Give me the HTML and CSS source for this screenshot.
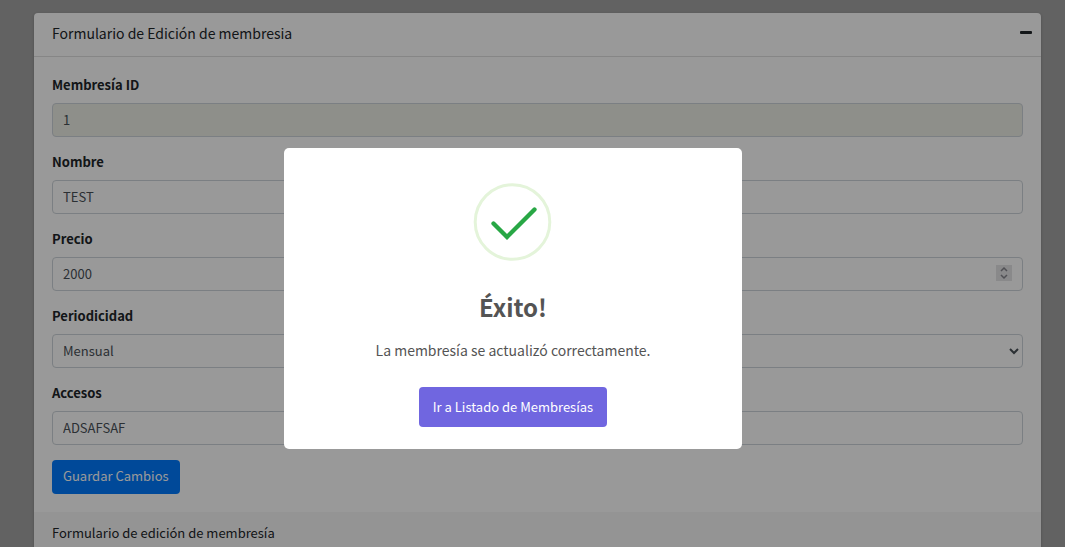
FILE: index.html
```html
<!DOCTYPE html>
<html lang="es">
<head>
<meta charset="utf-8">
<meta name="viewport" content="width=device-width, initial-scale=1">
<title>Edición de membresía</title>
<link rel="stylesheet" href="styles.css">
</head>
<body>
<main class="content">
  <section class="card">
    <header class="card-header">
      <h3 class="card-title">Formulario de Edición de membresia</h3>
      <button class="card-tool" type="button" aria-label="Contraer">
        <svg width="12" height="4" viewBox="0 0 12 4" aria-hidden="true"><rect width="12" height="3" rx="1" fill="currentColor"/></svg>
      </button>
    </header>
    <form class="card-body">
      <div class="form-group">
        <label for="membresia-id">Membresía ID</label>
        <input class="form-control" id="membresia-id" type="text" value="1" readonly>
      </div>
      <div class="form-group">
        <label for="nombre">Nombre</label>
        <input class="form-control" id="nombre" type="text" value="TEST">
      </div>
      <div class="form-group">
        <label for="precio">Precio</label>
        <input class="form-control" id="precio" type="number" value="2000">
      </div>
      <div class="form-group">
        <label for="periodicidad">Periodicidad</label>
        <select class="form-control" id="periodicidad"><option>Mensual</option></select>
      </div>
      <div class="form-group">
        <label for="accesos">Accesos</label>
        <input class="form-control" id="accesos" type="text" value="ADSAFSAF">
      </div>
      <button class="btn-primary" type="button">Guardar Cambios</button>
    </form>
    <footer class="card-footer">Formulario de edición de membresía</footer>
  </section>
</main>
<div class="overlay">
  <div class="modal" role="dialog" aria-modal="true" aria-labelledby="modal-title">
    <svg class="modal-icon" width="78" height="78" viewBox="0 0 78 78" fill="none" aria-hidden="true">
      <circle cx="38.500" cy="39" r="37.300" stroke="#e4f4da" stroke-width="3"/>
      <path d="M19.500 40.500 L33 54 L60.500 26.500" stroke="#28a745" stroke-width="4.300" stroke-linecap="round" stroke-linejoin="miter"/>
    </svg>
    <h2 class="modal-title" id="modal-title">Éxito!</h2>
    <p class="modal-text">La membresía se actualizó correctamente.</p>
    <button class="modal-confirm" type="button">Ir a Listado de Membresías</button>
  </div>
</div>
</body>
</html>
```
FILE: styles.css
```css
* {
  box-sizing: border-box;
}

body {
  margin: 0;
  height: 100vh;
  overflow: hidden;
  background: #a3a3a3;
  color: #212529;
  font: 13px/20px "Noto Sans CJK SC", "Noto Sans", sans-serif;
}

button,
input,
select {
  font: inherit;
}

.content {
  padding: 13px 24px 13px 34px;
}

.card {
  background: #fff;
  border-radius: 4px;
  box-shadow: 0 1px 3px rgba(0, 0, 0, 0.2);
}

.card-header {
  display: flex;
  align-items: center;
  justify-content: space-between;
  padding: 10px 9px 13px 18px;
  border-bottom: 1px solid #dfdfdf;
}

.card-title {
  margin: 0;
  font-size: 14px;
  font-weight: 400;
}

.card-tool {
  display: flex;
  padding: 0;
  border: 0;
  background: none;
  color: #212529;
}

.card-body {
  padding: 18px;
}

.form-group {
  display: flex;
  flex-direction: column;
  gap: 8px;
  margin-bottom: 15px;
}

.form-group label {
  font-weight: 700;
}

.form-control {
  width: 100%;
  height: 34px;
  padding: 4px 10px 6px;
  border: 1px solid #ced4da;
  border-radius: 4px;
  background: #fff;
  color: #495057;
}

.form-control:read-only:not(select) {
  background: #edefe6;
}

select.form-control {
  padding-left: 6px;
  padding-right: 0;
}

.form-control::-webkit-inner-spin-button {
  appearance: none;
  width: 16px;
  height: 16px;
  margin: auto 0;
  opacity: 1;
  background: #e4e4e6 url("data:image/svg+xml,%3Csvg xmlns='http://www.w3.org/2000/svg' width='16' height='16' fill='none' stroke='%2385858c' stroke-width='1.5'%3E%3Cpath d='M5 6l3-3 3 3M5 10l3 3 3-3'/%3E%3C/svg%3E");
}

.btn-primary {
  display: block;
  height: 34px;
  padding: 0 11px 2px;
  border: 0;
  border-radius: 4px;
  background: #007bff;
  color: #fff;
}

.card-footer {
  padding: 11px 18px;
  background: #f7f7f7;
  border-radius: 0 0 4px 4px;
}

.overlay {
  position: fixed;
  inset: 0;
  display: grid;
  place-items: center;
  padding: 50px 39px 0 0;
  background: rgba(0, 0, 0, 0.4);
}

.modal {
  display: flex;
  flex-direction: column;
  align-items: center;
  width: 100%;
  max-width: 458px;
  padding: 35px 14px 22px;
  border-radius: 5px;
  background: #fff;
  color: #545454;
}

.modal-icon {
  overflow: visible;
}

.modal-title {
  margin: 30px 0 15px;
  font-size: 24px;
  line-height: 32px;
}

.modal-text {
  margin: 0 0 25px;
  font-size: 14px;
  line-height: 24px;
}

.modal-confirm {
  height: 40px;
  padding: 0 14px;
  border: 0;
  border-radius: 4px;
  background: #7066e0;
  color: #fff;
}
```
